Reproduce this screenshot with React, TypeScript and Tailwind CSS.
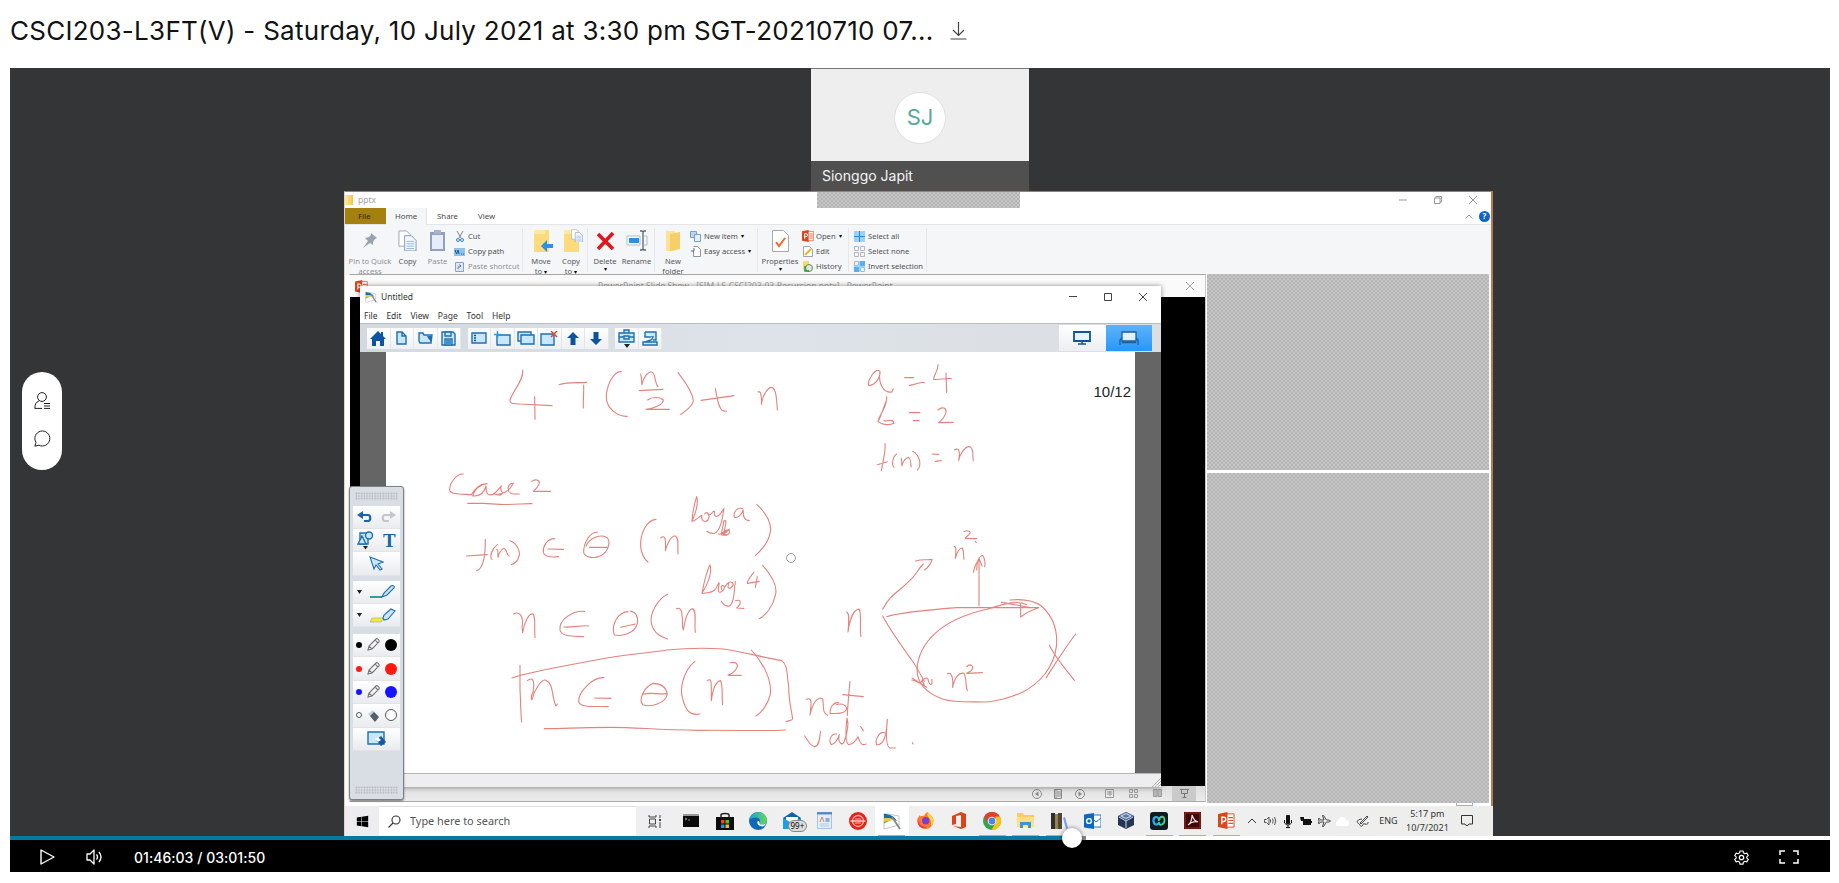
import React from "react";
import { FaWindows } from "react-icons/fa";

type Kids = { children?: React.ReactNode };

function Svg({ w, h, vb, children, className = "" }: { w: number; h: number; vb: string; className?: string } & Kids) {
  return (
    <svg width={w} height={h} viewBox={vb} fill="none" className={`block shrink-0 ${className}`}>
      {children}
    </svg>
  );
}

const HATCH =
  "bg-[#bdbdbd] bg-[repeating-conic-gradient(#b4b4b4_0_25%,#c6c6c6_0_50%)] bg-[length:4px_4px]";

/* ---------- File explorer ---------- */

function Big({ icon, label, width, dim, caret }: { icon: React.ReactNode; label: string[]; width: string; dim?: boolean; caret?: boolean }) {
  return (
    <div className={`flex shrink-0 flex-col items-center pt-[3px] ${width} ${dim ? "text-[#8d9095]" : "text-[#55585c]"}`}>
      <div className="mb-[0.5px] flex h-[25px] items-center">{icon}</div>
      {label.map((l, i) => (
        <span key={l} className="h-[10px] whitespace-nowrap leading-[14px]">
          {l}
          {caret && i === label.length - 1 && label.length > 1 ? <span className="ml-[2px] text-[6px] text-black">▾</span> : null}
        </span>
      ))}
      {caret && label.length === 1 ? <span className="h-[8px] text-[6px] leading-[11px] text-black">▾</span> : null}
    </div>
  );
}

function Small({ icon, label, dim, caret }: { icon: React.ReactNode; label: string; dim?: boolean; caret?: boolean }) {
  return (
    <div className={`flex h-[15.4px] items-center gap-[3px] whitespace-nowrap ${dim ? "text-[#8d9095]" : "text-[#4d5054]"}`}>
      <span className="flex w-[11px] justify-center">{icon}</span>
      <span>{label}</span>
      {caret && <span className="text-[6px] text-black">▾</span>}
    </div>
  );
}

const Divider = ({ m = "mx-[1px]" }: { m?: string }) => <div className={`my-[3px] w-px shrink-0 bg-[#e6e8eb] ${m}`} />;

const Pages = ({ s = 20 }: { s?: number }) => (
  <Svg w={s} h={s * 1.15} vb="0 0 20 23">
    <path d="M1 1h8l4 4v12H1z" fill="#fff" stroke="#9aa7b8" />
    <path d="M7 6h7l5 5v11H7z" fill="#f4f9ff" stroke="#8495ad" />
    <path d="M9 12h8M9 14.5h8M9 17h8M9 19.5h8" stroke="#8fb5e6" />
  </Svg>
);
const Folder = () => (
  <Svg w={17} h={24} vb="0 0 17 24">
    <path d="M1 1h15v22H1z" fill="#fbdb7c" />
    <path d="M1 1h11v4H1z" fill="#ffe9a5" />
  </Svg>
);
const PptIcon = ({ s }: { s: number }) => (
  <Svg w={s} h={s} vb="0 0 18 18">
    <path d="M8 2h9v14H8z" fill="#fff" stroke="#dd5026" />
    <path d="M11 6h5M11 9h5M11 12h5" stroke="#dd5026" strokeWidth="1.3" />
    <path d="M0 2 10 0v18L0 16z" fill="#d8481f" />
    <path d="M4 13V5.5h2a2 2 0 0 1 0 4.6H4" stroke="#fff" strokeWidth="1.5" />
  </Svg>
);

function Explorer() {
  return (
    <div className="flex h-[83px] w-full flex-col bg-white text-[7.6px]">
      <div className="flex h-[16px] items-center">
        <div className="h-[10px] w-[8px] bg-gradient-to-r from-[#ffe9a0] to-[#f4c64f]" />
        <span className="ml-[5px] text-[8.5px] text-[#a2a2a2]">pptx</span>
        <div className="ml-auto mr-[14px] flex items-center gap-[27px] text-[#9a9a9a]">
          <Svg w={8} h={8} vb="0 0 8 8"><path d="M0 4h8" stroke="#999" /></Svg>
          <Svg w={8} h={8} vb="0 0 8 8"><path d="M.5 2h5.5v5.500H.5zM2 2V.5h5.500V6H6" stroke="#999" /></Svg>
          <Svg w={8} h={8} vb="0 0 8 8"><path d="m0 0 8 8M8 0 0 8" stroke="#999" /></Svg>
        </div>
      </div>
      <div className="flex h-[17px] items-stretch border-b border-[#e4e5e7] text-[7.8px] text-[#4a4a4a]">
        <div className="flex w-[41px] items-center justify-center bg-[#a3800f] pr-[2px] pt-px text-[#2d2508]">File</div>
        <div className="-mb-px flex w-[41px] items-center justify-center border-r border-[#dfe1e4] bg-[#f4f6f8]">Home</div>
        <div className="flex w-[41px] items-center justify-center pt-px">Share</div>
        <div className="flex w-[37px] items-center justify-center pt-px">View</div>
        <div className="ml-auto mr-px flex items-center gap-[6px]">
          <Svg w={8} h={5} vb="0 0 8 5"><path d="M.5 4.500 4 1l3.500 3.500" stroke="#999" /></Svg>
          <div className="flex size-[11px] items-center justify-center rounded-full bg-[#0a66c6] text-[8px] font-bold text-white">?</div>
        </div>
      </div>
      <div className="flex h-[50px] items-stretch bg-[#f4f6f8]">
        <Big dim width="w-[46px] ml-[2px]" label={["Pin to Quick", "access"]}
          icon={<Svg w={16} h={17} vb="0 0 16 17"><path d="m9 1 6 5-2 1-2 3 0 3-3-2-7 5 5-7-3-3 4-1 2-2z" fill="#99a3b1" /></Svg>} />
        <Big width="w-[29px]" label={["Copy"]} icon={<Pages s={19} />} />
        <Big dim width="w-[31px]" label={["Paste"]}
          icon={<Svg w={17} h={23} vb="0 0 17 23"><path d="M1 3h15v19H1z" fill="#8fa1bd" /><path d="M3 6h11v14H3z" fill="#e6edf8" /><path d="M5 1h7v4H5z" fill="#a9b4c4" /></Svg>} />
        <div className="ml-px w-[68px] shrink-0 pt-[3.5px]">
          <Small label="Cut" icon={<Svg w={8} h={11} vb="0 0 8 11"><path d="m1 0 4 7M7 0 3 7" stroke="#7c8795" /><circle cx="2" cy="9" r="1.500" stroke="#2f80c8" /><circle cx="6" cy="9" r="1.500" stroke="#2f80c8" /></Svg>} />
          <Small label="Copy path" icon={<Svg w={11} h={8} vb="0 0 11 8"><path d="M0 0h11v8H0z" fill="#8fc3ee" /><path d="m1 2 1.500 4L4 2l1 4M7 6h1M9 6h1" stroke="#23547e" /></Svg>} />
          <Small dim label="Paste shortcut" icon={<Svg w={9} h={11} vb="0 0 9 11"><path d="M.5 1.500h8v9h-8z" fill="#dfe7f2" stroke="#8fa1bd" /><path d="M3 8c0-3 1-3 3-3M4.500 3.500 6 5 4.500 6.500" stroke="#5874a3" /></Svg>} />
        </div>
        <Divider m="ml-0 mr-[3px]" />
        <Big width="w-[30px]" caret label={["Move", "to"]}
          icon={<div className="relative"><Folder /><div className="absolute left-[8px] top-[11px]"><Svg w={12} h={12} vb="0 0 12 12"><path d="M0 6 6 0v4h6v4H6v4z" fill="#2b90e6" /></Svg></div></div>} />
        <Big width="w-[30px]" caret label={["Copy", "to"]}
          icon={<div className="relative"><Folder /><div className="absolute left-[8px] top-0"><Pages s={12} /></div></div>} />
        <Divider />
        <Big width="w-[32px]" caret label={["Delete"]}
          icon={<Svg w={19} h={18} vb="0 0 19 18"><path d="m2 2 15 15M17 1 2 17" stroke="#e3151a" strokeWidth="3.600" /></Svg>} />
        <Big width="w-[31px]" label={["Rename"]}
          icon={<Svg w={22} h={21} vb="0 0 22 21"><path d="M1 6h13v9H1z" fill="#fff" stroke="#b6bcc4" /><path d="M3 8h10v5H3z" fill="#2a8fe8" /><path d="M14 1h2l1 1 1-1h2M17 2v17M14 20h2l1-1 1 1h2" stroke="#5b6672" strokeWidth="1.300" /><path d="M18 6h3v9h-3" stroke="#b6bcc4" /></Svg>} />
        <Divider m="mx-[2px]" />
        <Big width="w-[32px]" label={["New", "folder"]}
          icon={<Svg w={14} h={20} vb="0 0 14 20"><path d="M0 0h9v20H0z" fill="#ffe293" /><path d="m4 3 10-2v17l-10 2z" fill="#f6cf68" /></Svg>} />
        <div className="ml-px w-[67px] shrink-0 pt-[3.5px]">
          <Small caret label="New item" icon={<Svg w={11} h={11} vb="0 0 11 11"><path d="M.5.500h6v6h-6z" fill="#b9d7f2" stroke="#7b9fc4" /><path d="M4.500 3.500h6v7h-6z" fill="#e4f1fc" stroke="#7b9fc4" /></Svg>} />
          <Small caret label="Easy access" icon={<Svg w={10} h={11} vb="0 0 10 11"><path d="M2.500.500h4l3 3v7h-7V5" fill="#fff" stroke="#8d97a3" /><path d="M0 5h3V2" stroke="#54677c" /></Svg>} />
        </div>
        <Divider m="mr-[1px]" />
        <Big width="w-[42px]" caret label={["Properties"]}
          icon={<Svg w={17} h={22} vb="0 0 17 22"><path d="M.5.500h11l5 5v16H.5z" fill="#fff" stroke="#a6a9ad" /><path d="m4 12 3 4 6-8" stroke="#f06a2b" strokeWidth="2" /></Svg>} />
        <div className="ml-px w-[46px] shrink-0 pt-[3.5px]">
          <Small caret label="Open" icon={<PptIcon s={12} />} />
          <Small label="Edit" icon={<Svg w={10} h={11} vb="0 0 10 11"><path d="M.5.500h6l3 3v7h-9z" fill="#fff" stroke="#9da3aa" /><path d="m2 9 6-6" stroke="#edb524" strokeWidth="2" /></Svg>} />
          <Small label="History" icon={<Svg w={11} h={11} vb="0 0 11 11"><path d="M1 0h6v9H1z" fill="#fbd76f" /><circle cx="7" cy="7" r="3.500" fill="#dfe8df" stroke="#5c8d57" /><path d="M3 5v5h4" stroke="#2f9a36" strokeWidth="1.500" /></Svg>} />
        </div>
        <Divider m="mr-[5px]" />
        <div className="w-[71px] shrink-0 pt-[3.5px]">
          <Small label="Select all" icon={<Svg w={11} h={11} vb="0 0 11 11"><path d="M0 0h11v11H0z" fill="#9bd0f8" /><path d="M5.500 0v11M0 5.500h11" stroke="#2f8ad8" /></Svg>} />
          <Small label="Select none" icon={<Svg w={11} h={11} vb="0 0 11 11"><path d="M.5.500h4v4h-4zM6.500.500h4v4h-4zM.5 6.500h4v4h-4zM6.500 6.500h4v4h-4z" stroke="#b4b8bd" /></Svg>} />
          <Small label="Invert selection" icon={<Svg w={11} h={11} vb="0 0 11 11"><path d="M5.500 0H11v5.500H5.500zM0 5.500h5.500V11H0z" fill="#58aff0" /><path d="M.5.500h4v4h-4zM6.500 6.500h4v4h-4z" fill="#e3f1fc" stroke="#8fc0e8" /></Svg>} />
        </div>
        <Divider />
      </div>
    </div>
  );
}

/* ---------- Whiteboard ---------- */

const INK_A = [
  "M368 60C372 90 340 120 330 150C328 162 340 160 360 162L456 167M404 140L405 208",
  "M477 104C500 96 530 99 560 97M551 105C552 130 549 150 550 174",
  "M664 65C640 62 618 110 619 145C622 175 650 200 682 199",
  "M722 72C726 85 724 95 726 104C730 80 745 64 755 66C768 70 762 95 774 110M718 122L789 118",
  "M743 150C755 140 780 140 790 150C790 163 762 176 738 178L808 178",
  "M834 68C855 95 880 130 880 155C872 175 856 184 842 193",
  "M903 151L1002 137M946 116C950 140 955 165 962 176C966 186 974 183 980 183",
  "M1074 126C1082 120 1086 140 1084 163C1088 135 1104 112 1114 112C1128 112 1130 145 1132 180",
  "M190 372C170 370 148 400 149 420C150 435 190 432 214 434C222 420 240 398 262 402C250 400 225 412 218 438C240 440 252 430 258 408C258 425 260 438 276 434C290 430 300 410 304 408C296 430 318 425 300 436L282 432C310 436 330 420 340 400C320 398 318 430 340 432L358 432",
  "M395 394C405 386 420 390 418 400C414 412 405 420 400 424L452 424",
  "M203 460L250 460L300 463C340 466 370 460 396 461",
  "M199 618L262 614M256 568C256 600 252 640 242 652C238 662 232 660 230 662M292 584C275 596 268 622 276 628M290 598C298 600 292 610 294 622C298 604 308 594 314 596C322 600 320 618 328 618M330 572C355 580 362 612 356 620C354 634 345 640 334 644",
  "M464 566C440 566 428 590 430 608C435 622 458 622 476 620M444 597L491 598",
  "M592 547C570 545 550 580 551 608C556 624 586 626 600 618C630 604 634 566 616 560C602 554 570 562 558 588M568 592L622 592",
  "M768 508C740 510 720 550 722 590C724 610 734 628 744 636",
  "M782 564C796 552 798 570 796 602C802 580 814 556 826 558C838 562 832 590 834 612",
  "M890 440C896 460 884 496 876 514C878 484 886 452 890 440M876 514C886 512 898 500 906 496C902 512 914 520 924 510C932 496 920 480 914 492M924 494C934 500 936 480 944 484C940 500 950 506 962 490L972 476C966 510 962 540 944 550C934 552 926 548 920 544",
  "M1028 476C1010 470 998 490 1004 502C1016 506 1026 490 1030 480C1028 500 1034 512 1048 512",
  "M970 516C978 505 982 512 970 552M956 552C968 556 976 532 988 542C994 552 976 558 964 554M972 512L964 552L988 538L972 552L980 556",
  "M1070 463C1100 490 1118 525 1110 550C1104 580 1085 600 1066 617",
];
const INK_B = [
  "M340 222C360 212 372 230 366 262L368 278C372 250 386 218 400 222C408 240 402 260 405 293",
  "M554 214C520 210 475 240 480 270C484 290 520 288 551 290M492 261C520 263 545 255 566 258",
  "M684 215C655 216 632 254 643 285C665 290 706 280 712 250C716 225 706 216 690 213M662 262L706 252",
  "M803 163C775 175 748 220 754 250C762 280 780 290 803 297",
  "M829 206C838 202 846 206 846 228C850 240 844 256 850 270C854 245 862 212 876 206C892 208 882 250 886 277",
  "M930 75C938 100 918 140 906 160C912 128 920 92 930 75M906 160C922 158 940 160 948 145C956 128 960 120 956 140C950 168 970 156 974 140C966 132 960 140 966 150M974 142C986 120 998 124 1000 134C990 150 980 148 986 130M1006 124C1002 160 1002 190 988 198C976 200 968 190 964 184",
  "M1062 96C1050 112 1040 124 1042 130L1078 124M1072 110L1066 142M1006 182C1024 176 1026 190 1010 204L1032 205",
  "M1088 76C1118 110 1134 140 1126 166C1118 200 1098 226 1078 236",
  "M360 376L360 450C362 480 362 520 365 546M336 414C400 392 520 374 620 354C700 340 760 338 800 330C860 324 930 324 970 327C1030 336 1080 350 1145 362C1164 376 1160 400 1166 440C1166 480 1174 510 1178 536C1176 544 1168 540 1158 545",
  "M382 422C398 410 404 420 400 450C402 460 388 464 396 480C402 450 424 418 436 420C462 430 454 470 468 498L472 492",
  "M612 413C580 410 534 455 536 485C540 505 590 498 625 500M584 474L633 475",
  "M762 430C730 440 716 480 728 494C755 504 798 488 802 462C798 440 785 430 758 430M729 463C750 456 775 464 800 461",
  "M885 364C850 390 838 450 848 475C856 510 870 528 900 522",
  "M922 422C936 412 934 430 934 482C938 450 948 424 962 422C970 440 964 470 968 494",
  "M990 368C1010 364 1016 374 1010 385C1002 398 994 402 984 406L1024 406",
  "M1054 330C1096 376 1118 430 1110 466C1104 490 1088 516 1068 528",
  "M433 566C500 566 530 562 630 562C720 562 760 570 900 571C1020 570 1080 574 1157 570",
];
const INK_C = [
  "M298 62C285 56 262 90 266 106C290 106 302 76 300 64C294 100 310 130 336 126L340 116M374 83L401 83M388 106C404 106 420 94 434 98",
  "M474 44C474 66 460 76 461 88C478 90 495 84 514 86M498 70L500 127",
  "M320 140C322 170 300 190 294 214C306 226 330 226 342 220L338 212C325 210 318 214 312 212M318 154L298 208M388 188L420 188M400 212L418 212",
  "M474 180C488 168 500 174 498 188C492 204 482 214 476 218L520 217",
  "M315 281C318 300 308 340 304 362M292 344L322 335M350 312C338 320 334 346 342 352M364 324L366 348C368 332 380 322 386 322C396 330 390 342 394 350M398 304C420 316 426 346 412 360M456 312L476 313M466 334L484 332",
  "M523 300C540 290 540 310 536 332C540 310 556 288 570 290C584 300 576 320 580 332",
  "M552 545C564 538 576 546 568 552C562 560 556 562 556 565L590 566M586 574L589 578",
  "M522 590C530 588 528 606 526 625C532 604 540 594 546 594C552 600 550 616 552 628",
  "M308 778C330 735 350 730 380 700C415 672 410 660 430 642M407 633C430 626 445 632 456 628C454 640 444 652 434 660",
  "M597 767L597 624M580 667C584 650 588 640 592 636L590 660M592 636C596 624 602 618 608 616C614 626 616 640 614 650M597 624L606 648",
  "M200 786C210 790 206 820 204 846C210 800 224 778 238 777C246 800 238 840 243 860",
  "M320 800C360 788 440 780 530 773L776 773C750 782 735 790 722 801L722 760M664 757C690 760 720 768 748 772",
  "M308 798C330 840 370 895 395 930C410 950 425 980 433 994",
  "M690 750C730 746 760 750 784 768C820 800 834 840 829 890C822 950 780 1000 730 1025C690 1045 640 1055 615 1056C570 1055 520 1058 490 1048C440 1030 412 1000 411 960C415 880 480 810 620 778C680 760 710 750 740 764",
  "M396 990C410 992 425 1002 440 1012M396 984L434 1008L426 990M420 1000C430 985 440 980 444 988C446 1000 452 1008 456 1000L456 988",
  "M502 971C514 966 520 980 518 1012C524 980 538 966 552 970C560 985 556 1005 562 1022",
  "M560 950C572 938 584 950 574 962L560 970L607 968",
  "M808 886C830 930 860 960 883 991M887 852C850 900 820 950 798 984",
  "M78 1048C98 1040 94 1060 90 1095C98 1060 110 1040 128 1046C132 1070 126 1088 143 1096M176 1058C160 1056 148 1074 150 1090C180 1092 200 1088 200 1074C196 1062 180 1060 170 1064M210 995C206 1030 204 1060 202 1096M188 1034L250 1040",
  "M74 1158C86 1174 90 1188 104 1190C120 1188 118 1160 122 1144M170 1152C150 1150 146 1176 154 1184C170 1180 176 1160 178 1154C172 1176 186 1190 192 1176C202 1150 206 1120 201 1104C196 1140 196 1180 206 1184C224 1180 230 1168 234 1160C240 1180 246 1188 258 1182M242 1130L250 1142",
  "M314 1148C298 1142 284 1170 290 1184C310 1186 320 1160 322 1108C318 1150 318 1190 330 1194L346 1194M397 1178L399 1182",
];

function Board() {
  return (
    <svg width="749" height="421" viewBox="386 352 749 421" fill="none" className="block bg-white">
      <g stroke="#e4827d" strokeWidth="3.300" strokeLinecap="round" strokeLinejoin="round">
        <g transform="translate(400 350) scale(.33333)">{INK_A.map((d) => <path key={d} d={d} />)}</g>
        <g transform="translate(400 540) scale(.33333)">{INK_B.map((d) => <path key={d} d={d} />)}</g>
        <g transform="translate(780 350) scale(.33333)">{INK_C.map((d) => <path key={d} d={d} />)}</g>
      </g>
      <circle cx="791" cy="558" r="4.500" stroke="#9c9c9c" />
      <text x="1093.5" y="397" fill="#222" fontSize="15" fontFamily="Liberation Sans, sans-serif">10/12</text>
    </svg>
  );
}

const Tool = ({ children }: Kids) => (
  <div className="flex h-[21px] w-[23.5px] items-center justify-center border-r border-[#e3e6ea] bg-gradient-to-b from-white to-[#eef0f3]">{children}</div>
);
const blue = { stroke: "#1f6fb2", strokeWidth: 1.4, fill: "#c9e7fb" };

function SmartMark({ s }: { s: number }) {
  return (
    <Svg w={s} h={s} vb="0 0 18 18">
      <path d="M1 1.500 16 4v9L1 17z" fill="#fff" stroke="#c2c5c7" />
      <path d="M1 2c6 0 10 2 13 7C10 7 6 6 1 6z" fill="#166fae" />
      <path d="M1 6c4 0 7 0 10 2l-10 2z" fill="#e8cb3c" />
      <path d="M1 10 7 8.500l-6 3z" fill="#4ea35a" />
      <path d="m9 5 8 12" stroke="#85898c" strokeWidth="1.800" />
    </Svg>
  );
}

function Notebook() {
  return (
    <div className="absolute left-[15px] top-[94px] flex h-[501px] w-[801px] flex-col bg-white shadow-[0_0_5px_rgba(0,0,0,0.45)]">
      <div className="flex h-[22px] items-center pl-[5px] pr-[14px]">
        <SmartMark s={12} />
        <span className="ml-[4px] text-[8.500px] text-[#333]">Untitled</span>
        <div className="ml-auto flex items-center gap-[27px]">
          <Svg w={8} h={8} vb="0 0 8 8"><path d="M0 3.500h8" stroke="#444" /></Svg>
          <Svg w={8} h={8} vb="0 0 8 8"><path d="M.5.500h7v7h-7z" stroke="#444" /></Svg>
          <Svg w={8} h={8} vb="0 0 8 8"><path d="m0 0 8 8M8 0 0 8" stroke="#444" /></Svg>
        </div>
      </div>
      <div className="flex h-[15px] items-center gap-[8.800px] pl-[4px] pt-[2px] text-[8.500px] text-[#333]">
        {["File", "Edit", "View", "Page", "Tool", "Help"].map((m) => <span key={m}>{m}</span>)}
      </div>
      <div className="flex h-[29px] shrink-0 items-center border-t border-[#b9bdc1] bg-gradient-to-r from-[#d3dadf] via-[#dde3e8] to-[#dbdee3] pl-[7px] pr-[9px]">
        <div className="flex">
          <Tool><Svg w={16} h={15} vb="0 0 16 15"><path d="M8 0 0 8h2v7h4v-5h4v5h4V8h2l-3-3V1h-2v2z" fill="#0d54a0" /></Svg></Tool>
          <Tool><Svg w={11} h={14} vb="0 0 11 14"><path d="M1 1h5l4 4v8H1zM6 1v4h4" {...blue} /></Svg></Tool>
          <Tool><Svg w={15} h={12} vb="0 0 15 12"><path d="M1 1h4l1 2h6l2 0-1 8H2L1 9z" {...blue} /><path d="M9 4h5l-1 6-3-4z" fill="#1f6fb2" /></Svg></Tool>
          <Tool><Svg w={15} h={15} vb="0 0 15 15"><path d="M1 1h11l2 2v11H1z" {...blue} /><path d="M4 1h6v4H4zM4 8h7v6H4zM5 10h5M5 12h5" {...blue} /></Svg></Tool>
        </div>
        <div className="ml-[6.500px] flex">
          <Tool><Svg w={16} h={12} vb="0 0 16 12"><path d="M1 1h14v10H1z" {...blue} /><path d="M3 3.500h2M3 6h2M3 8.500h2" stroke="#0d54a0" strokeWidth="1.500" /></Svg></Tool>
          <Tool><Svg w={17} h={15} vb="0 0 17 15"><path d="M3 4h13v10H3z" {...blue} /><path d="M3.500 0v7M0 3.500h7" stroke="#2d9bd6" strokeWidth="1.500" /></Svg></Tool>
          <Tool><Svg w={18} h={14} vb="0 0 18 14"><path d="M1 1h13v9H1z" {...blue} /><path d="M4 4h13v9H4z" {...blue} /></Svg></Tool>
          <Tool><Svg w={18} h={15} vb="0 0 18 15"><path d="M1 3h13v11H1z" {...blue} /><path d="m11 0 6 6m0-6-6 6" stroke="#dd4b2c" strokeWidth="1.500" /></Svg></Tool>
          <Tool><Svg w={12} h={13} vb="0 0 12 13"><path d="m6 0 6 6H8.500v7h-5V6H0z" fill="#0d54a0" /></Svg></Tool>
          <Tool><Svg w={12} h={13} vb="0 0 12 13"><path d="m6 13 6-6H8.500V0h-5v7H0z" fill="#0d54a0" /></Svg></Tool>
        </div>
        <div className="ml-[6.500px] flex">
          <Tool><Svg w={17} h={19} vb="0 0 17 19"><path d="M1 4h15v9H1zM6 4V1h5v3M1 8h5M11 8h5M6 7h5v3H6z" {...blue} /><path d="M6 15h6l-3 4z" fill="#222" /></Svg></Tool>
          <Tool><Svg w={16} h={15} vb="0 0 16 15"><path d="M3 1h11v8h-3M3 1v5h7" {...blue} /><path d="M11 5c0 4-2 4-8 6M1 11h14v3H1z" {...blue} /></Svg></Tool>
        </div>
        <div className="ml-auto flex h-[26px]">
          <div className="flex w-[47px] items-center justify-center bg-gradient-to-b from-white to-[#eceef1] pr-[2px]">
            <Svg w={18} h={14} vb="0 0 18 14"><path d="M1 1h16v9H1z" fill="#e7f4fd" stroke="#0d54a0" strokeWidth="1.800" /><path d="M9 10v3M5 13h8" stroke="#0d54a0" strokeWidth="1.500" /></Svg>
          </div>
          <div className="flex w-[46px] items-center justify-center bg-gradient-to-b from-[#5cb2f8] to-[#2597fb]">
            <Svg w={20} h={15} vb="0 0 20 15"><path d="M3 1h14v9H3z" fill="#dff2ff" stroke="#1b5d9e" strokeWidth="1.300" /><path d="M3 7 1 9v5M17 7l2 2v5M3 11.500h14" stroke="#1b5d9e" strokeWidth="1.300" /></Svg>
          </div>
        </div>
      </div>
      <div className="flex h-[421px] shrink-0 bg-[#656565] pl-[26px]"><Board /></div>
      <div className="flex flex-1 items-end justify-end border-t border-[#b5b5b8] bg-[#eeeef1]">
        <Svg w={9} h={9} vb="0 0 9 9"><path d="m0 9 9-9M3 9l6-6M6 9l3-3" stroke="#999" strokeWidth=".8" /></Svg>
      </div>
    </div>
  );
}

/* ---------- Floating tool palette ---------- */

const Row = ({ children, className = "" }: Kids & { className?: string }) => (
  <div className={`flex h-[23.400px] shrink-0 items-center justify-around border-b border-[#e2e4e8] bg-gradient-to-b from-white to-[#e9ebee] ${className}`}>{children}</div>
);
const Grip = () => (
  <div className="mx-[2px] h-[8px] shrink-0 bg-[radial-gradient(#b4b8bd_0.800px,transparent_1px)] bg-[length:2.700px_2.700px]" />
);
const Caret = () => <Svg w={5} h={4} vb="0 0 5 4"><path d="M0 0h5L2.500 4z" fill="#222" /></Svg>;
const Pencil = () => (
  <Svg w={13} h={14} vb="0 0 13 14"><path d="m1 12 1-4 7-7c1-1 4 1 3 3l-7 7zM8 2l3 3M2 8l3 3" stroke="#777" strokeWidth="1.100" /></Svg>
);
function PenRow({ dot, big }: { dot: string; big: string }) {
  return (
    <Row>
      <div className={`size-[6px] rounded-full ${dot}`} />
      <Pencil />
      <div className={`size-[12px] rounded-full ${big}`} />
    </Row>
  );
}

function Palette() {
  return (
    <div className="absolute left-[4px] top-[294px] flex h-[314px] w-[55px] flex-col rounded-[3px] border border-[#7d8186] bg-[#d9dde4] px-[3px] pb-[5px] pt-[5px] shadow-[0_1px_2px_rgba(0,0,0,0.5)]">
      <Grip />
      <Row className="mt-[5.500px]">
        <Svg w={15} h={12} vb="0 0 15 12"><path d="M3 4h8c3 0 3 6 0 6H7" stroke="#1d63ab" strokeWidth="2.200" /><path d="M0 4 6 0v8z" fill="#1d63ab" /></Svg>
        <Svg w={15} h={12} vb="0 0 15 12"><path d="M12 4H4c-3 0-3 6 0 6h4" stroke="#c2c5c9" strokeWidth="2.200" /><path d="M15 4 9 0v8z" fill="#c2c5c9" /></Svg>
      </Row>
      <Row>
        <Svg w={17} h={19} vb="0 0 17 19"><path d="M3 2h8v11H3z" {...blue} /><path d="m1 13 4-8 4 8z" {...blue} /><circle cx="12" cy="4.500" r="3.500" {...blue} /><path d="M6 15h5l-2.500 3.500z" fill="#222" /></Svg>
        <span className="font-['Liberation_Serif'] text-[19px] font-bold leading-none text-[#1c62a8]">T</span>
      </Row>
      <Row><Svg w={15} h={15} vb="0 0 15 15"><path d="m1 1 13 5-5 2 4 5-2 1-4-5-2 4z" {...blue} strokeWidth={1.1} /></Svg></Row>
      <Row className="mt-[5px]">
        <Caret />
        <Svg w={27} h={14} vb="0 0 27 14"><path d="M1 12h12" stroke="#159a86" strokeWidth="1.800" /><path d="m13 12 2-4 7-7c2-1 4 0 3 2l-7 7z" {...blue} strokeWidth={1.1} /></Svg>
      </Row>
      <Row>
        <Caret />
        <Svg w={27} h={15} vb="0 0 27 15"><path d="M3 10h12l-3 4H1z" fill="#f4ef24" stroke="#aaa" strokeWidth=".7" /><path d="m14 10 1-3 7-6 4 2-7 8-4 1z" {...blue} strokeWidth={1.1} /></Svg>
      </Row>
      <div className="h-[6.500px] shrink-0" />
      <PenRow dot="bg-black" big="bg-black" />
      <PenRow dot="bg-[#ff1a0d]" big="bg-[#ff1a0d]" />
      <PenRow dot="bg-[#1414ff]" big="bg-[#1414ff]" />
      <Row>
        <div className="size-[6px] rounded-full border border-[#555] bg-white" />
        <Svg w={12} h={13} vb="0 0 12 13"><path d="m1 5 5-4 4 5-4 4z" fill="#ccd1d6" /><path d="m3 7 4-4 5 5-4 5z" fill="#515f6e" /></Svg>
        <div className="size-[12px] rounded-full border border-[#555] bg-white" />
      </Row>
      <Row><Svg w={20} h={16} vb="0 0 20 16"><path d="M1 1h16v12H1z" {...blue} /><path d="m9 9 5-4 5 6-5 4z" fill="#1559a4" /><path d="m8 8 3-2 3 3-3 2z" fill="#fff" /></Svg></Row>
      <div className="flex-1" />
      <Grip />
    </div>
  );
}

/* ---------- Slide show window behind ---------- */

function SlideShow() {
  return (
    <div className="absolute left-[4px] top-[82px] flex h-[528px] w-[857px] flex-col border border-b-[#a9a9a9] border-l-transparent border-r-[#c8c8c8] border-t-[#a6a6a6] bg-[#fafafa]">
      <div className="flex h-[22px] shrink-0 items-center pl-[5px] pr-[11px] text-[8.500px] text-[#a5a5a5]">
        <PptIcon s={13} />
        <span className="ml-[230px] whitespace-nowrap">PowerPoint Slide Show - [SIM-LS-CSCI203-03-Recursion.pptx] - PowerPoint</span>
        <div className="ml-auto"><Svg w={8} h={8} vb="0 0 8 8"><path d="m0 0 8 8M8 0 0 8" stroke="#aaa" /></Svg></div>
      </div>
      <div className="h-[489px] shrink-0 bg-black" />
      <div className="flex flex-1 items-center justify-end bg-gradient-to-b from-[#dcdcdc] to-[#ededee] pr-[9px]">
        <div className="flex items-center gap-[12px]">
          <Svg w={10} h={10} vb="0 0 10 10"><circle cx="5" cy="5" r="4.500" stroke="#888" /><path d="M6.500 2.500v5L3 5z" fill="#888" /></Svg>
          <Svg w={9} h={10} vb="0 0 9 10"><path d="M.5.500h7v9h-7zM2 .5v9" stroke="#888" /><path d="M3 3h4M3 5h4M3 7h4" stroke="#888" /></Svg>
          <Svg w={10} h={10} vb="0 0 10 10"><circle cx="5" cy="5" r="4.500" stroke="#888" /><path d="M3.500 2.500v5L7 5z" fill="#888" /></Svg>
        </div>
        <div className="ml-[20px] flex items-center gap-[15px]">
          <Svg w={9} h={9} vb="0 0 9 9"><path d="M.5.500h8v8h-8zM2 3h5M2 5h5M5 2v5" stroke="#999" /></Svg>
          <Svg w={9} h={9} vb="0 0 9 9"><path d="M.5.500h3v3h-3zM5.500.500h3v3h-3zM.5 5.500h3v3h-3zM5.500 5.500h3v3h-3z" stroke="#999" /></Svg>
          <Svg w={9} h={9} vb="0 0 9 9"><path d="M.5.500h3.500v7H.5zM5 .500h3.500v7H5z" fill="#bbb" stroke="#999" /></Svg>
        </div>
        <div className="ml-[10px] flex h-full w-[24px] items-center justify-center bg-[#cacaca]">
          <Svg w={9} h={9} vb="0 0 9 9"><path d="M0 .500h9M1.500 1v3.500h6V1M4.500 5v3.500M2.500 8.500h4" stroke="#777" /></Svg>
        </div>
      </div>
    </div>
  );
}

/* ---------- Taskbar ---------- */

const TaskApp = ({ children, tint = "", open = false }: Kids & { tint?: string; open?: boolean }) => (
  <div className={`flex h-full w-[33.450px] shrink-0 flex-col items-center ${tint}`}>
    <div className="flex flex-1 items-center pt-px">{children}</div>
    <div className={`h-[1.500px] w-[27px] ${open ? "bg-[#c3b35c]" : ""}`} />
  </div>
);

function Taskbar() {
  return (
    <div className="absolute left-0 top-[614px] flex h-[30px] w-[1148px] items-center bg-gradient-to-r from-[#ededf0] via-[#f0f0f0] to-[#ededec] shadow-[0_1px_0_#8f8f8f]">
      <div className="flex w-[34px] justify-center text-[13px] text-black"><FaWindows /></div>
      <div className="flex h-full w-[257px] items-center border-t border-[#ddd] bg-white pl-[9px]">
        <Svg w={13} h={13} vb="0 0 13 13"><circle cx="8" cy="5" r="4" stroke="#333" strokeWidth="1.100" /><path d="m5 8-4.500 4.500" stroke="#333" strokeWidth="1.100" /></Svg>
        <span className="ml-[9px] text-[10.900px] text-[#555]">Type here to search</span>
      </div>
      <div className="flex w-[38.500px] justify-center">
        <Svg w={14} h={13} vb="0 0 14 13"><path d="M1 0v2h7V0M1 13v-2h7v2M1.500 4h6v5h-6zM12 0v3M12 7v6" stroke="#444" /><path d="M11 4h2v2h-2z" fill="#444" /></Svg>
      </div>
      <TaskApp><Svg w={16} h={13} vb="0 0 16 13"><path d="M0 0h16v13H0z" fill="#0b0b0b" /><path d="M0 0h16v2H0z" fill="#999" /><path d="m2 4 2 1-2 1M5 6h2" stroke="#aaa" strokeWidth=".8" /></Svg></TaskApp>
      <TaskApp><Svg w={18} h={18} vb="0 0 18 18"><path d="M0 5h18v13H0z" fill="#0c0c0c" /><path d="M5 6V3c0-2 8-2 8 0v3" stroke="#222" strokeWidth="1.500" /><path d="M5 8h3.500v3.500H5z" fill="#e64b27" /><path d="M9.500 8H13v3.500H9.500z" fill="#77b900" /><path d="M5 12.500h3.500V16H5z" fill="#0a9ce8" /><path d="M9.500 12.500H13V16H9.500z" fill="#fcb813" /></Svg></TaskApp>
      <TaskApp>
        <Svg w={18} h={18} vb="0 0 18 18">
          <defs>
            <linearGradient id="edge" x1="0" y1="4" x2="18" y2="6" gradientUnits="userSpaceOnUse"><stop stopColor="#1c9fdc" /><stop offset="1" stopColor="#62d95a" /></linearGradient>
          </defs>
          <circle cx="9" cy="9" r="9" fill="#1068b5" />
          <path d="M.2 8C1.500 2.500 5 0 9 0c5 0 9 3.500 9 8 0 3-2.500 4.500-5 4.500-2 0-3-.8-2.500-1.800C12 8 10 5.500 7 5.500 4 5.500 1.500 6.500.2 8z" fill="url(#edge)" />
          <path d="M10.500 10.700c-.5 1 .5 1.800 2.500 1.800 1.500 0 3-.6 4-1.600-.5 2-2 3.500-3.800 3.500-3.200 0-5.600-2.400-4.700-5 .5-1 2-.5 2 1.300z" fill="#fff" />
        </Svg>
      </TaskApp>
      <TaskApp>
        <div className="relative">
          <Svg w={18} h={17} vb="0 0 18 17"><path d="M0 6 9 0l9 6v11H0z" fill="#1065a8" /><path d="M3 5h12v5H3z" fill="#fff" /><path d="m0 6 9 5 9-5v11H0z" fill="#229ee6" /></Svg>
          <div className="absolute left-[5px] top-[8px] rounded-full border border-[#888] bg-[#dcdcdc] px-[2px] text-[8px] leading-[10px] text-black">99+</div>
        </div>
      </TaskApp>
      <TaskApp><Svg w={15} h={17} vb="0 0 15 17"><path d="M.5.500h14v16H.5z" fill="#e3eefa" stroke="#a9c3e0" /><path d="M0 0h15v2.500H0z" fill="#5f8cc0" /><path d="m3 10 2-5 2 5" stroke="#d98b4b" /><path d="M8.500 6h4v4h-4z" fill="#86aede" /><path d="M3 12h9M3 14h9" stroke="#b4c9e2" /></Svg></TaskApp>
      <TaskApp><Svg w={18} h={18} vb="0 0 18 18"><circle cx="9" cy="9" r="9" fill="#ec1f17" /><circle cx="9" cy="9" r="5.500" stroke="#ffb7b2" strokeWidth="1.300" /><path d="M1.500 9h15" stroke="#ffd0cc" strokeWidth="1.500" /><path d="M6 7h6M6 11h6" stroke="#ffb7b2" /></Svg></TaskApp>
      <TaskApp tint="bg-white" open><SmartMark s={18} /></TaskApp>
      <TaskApp>
        <Svg w={17} h={17} vb="0 0 17 17">
          <path d="M8.500 17A8.200 8.200 0 0 1 .5 8.500C.5 6 1.500 4.500 3 3l.5 1.500C4.500 3.500 6 3.500 7 4c1-2 2-3.500 4-4 0 2 5.500 3.500 5.500 8.500a8.200 8.200 0 0 1-8 8.500z" fill="#ff7a2b" />
          <path d="M11 0c0 2 5.500 3.500 5.500 8.500 0 2-1 4.500-2.500 6 .5-3 .5-5-1.500-8C11 4.500 9.500 3 11 0z" fill="#ffd23e" />
          <path d="M1 6c0 6 4 9 9 9-3 2.500-9 1-9.500-6z" fill="#f5365c" />
          <circle cx="8.700" cy="8.700" r="3.700" fill="#7a3fd1" />
        </Svg>
      </TaskApp>
      <TaskApp><Svg w={14} h={17} vb="0 0 14 17"><path d="m9 0 5 2v13l-5 2-8-3 8 1V3L4 4v8l-4 1V4z" fill="#dc4416" /></Svg></TaskApp>
      <TaskApp open>
        <Svg w={18} h={18} vb="0 0 18 18"><circle cx="9" cy="9" r="9" fill="#34a350" /><path d="M1.200 4.500A9 9 0 0 1 16.800 4.500L9 9z" fill="#e2402f" /><path d="M1.200 4.500 5 11.500 9 9 9 4.500h7.800z" fill="#e2402f" /><path d="M16.800 4.500A9 9 0 0 1 8.500 18L12.500 11l0-6.500z" fill="#fbc116" /><circle cx="9" cy="9" r="4.300" fill="#fff" /><circle cx="9" cy="9" r="3.400" fill="#4a86ea" /></Svg>
      </TaskApp>
      <TaskApp open><Svg w={17} h={15} vb="0 0 17 15"><path d="M0 0h6l1 2h10v12H0z" fill="#f8cd5c" /><path d="M0 4h17v10H0z" fill="#ffdf83" /><path d="M3 15V9h11v6h-3v-3H6v3z" fill="#3c93d8" /></Svg></TaskApp>
      <TaskApp open><Svg w={17} h={16} vb="0 0 17 16"><path d="M0 0h4v16H0z" fill="#30302b" /><path d="M4 1h3v15H4z" fill="#9b8351" /><path d="M7 0h4v16H7z" fill="#514738" /><path d="m12 5 2-1 3 11-2 1z" fill="#7f9fe6" /></Svg></TaskApp>
      <TaskApp><Svg w={17} h={16} vb="0 0 17 16"><path d="M8 2h9v12H8z" fill="#fff" stroke="#1f78c4" /><path d="m8 5 4 4 5-4" stroke="#1f78c4" /><path d="M0 1.500 10 0v16L0 14.500z" fill="#0d69bb" /><circle cx="5" cy="8" r="2.400" stroke="#fff" strokeWidth="1.400" /></Svg></TaskApp>
      <TaskApp><Svg w={16} h={17} vb="0 0 16 17"><path d="m8 0 8 4v9l-8 4-8-4V4z" fill="#23365a" /><path d="m8 0 8 4-8 4-8-4z" fill="#5f7aa6" /><path d="m1 5 7 4v7M15 5 8 9M8 1.500l5 2.500-5 2.500L3 4z" stroke="#dfe8f4" strokeWidth=".9" /></Svg></TaskApp>
      <TaskApp open><Svg w={18} h={18} vb="0 0 18 18"><rect width="18" height="18" rx="3" fill="#111b22" /><path d="M9.500 8c-2-5-6.500-3-6 1s4 5 6 1" stroke="#29a9f2" strokeWidth="2.200" /><path d="M8.500 9c1-5 6-6 6-1s-4.500 6-6 3" stroke="#4bd27c" strokeWidth="1.800" /></Svg></TaskApp>
      <TaskApp open><Svg w={17} h={17} vb="0 0 17 17"><path d="M0 0h17v17H0z" fill="#3a0806" /><path d="M1 1h15v15H1z" stroke="#b5271f" /><path d="M8 3c2 5 3 6 6 7-4-1-7 0-10 3 3-2 4-5 4-10z" stroke="#f2d9d7" strokeWidth="1.200" /></Svg></TaskApp>
      <TaskApp open><PptIcon s={17} /></TaskApp>
      <div className="ml-[0.500px] flex items-center text-[9px] text-[#333]">
        <div className="flex w-[18px] justify-center"><Svg w={10} h={6} vb="0 0 9 6"><path d="M.5 5 4.500 1l4 4" stroke="#333" /></Svg></div>
        <div className="flex w-[18px] justify-center"><Svg w={13} h={10} vb="0 0 13 10"><path d="M.5 3.500h2L5 1v8L2.500 6.500h-2zM6.500 3.500v3M8.500 2.500q1.500 2.500 0 5M10.500 1q2.500 4 0 8" stroke="#444" strokeWidth=".9" /></Svg></div>
        <div className="flex w-[18px] justify-center"><Svg w={8} h={13} vb="0 0 8 13"><rect x="2" width="4" height="9" rx="1" fill="#111" /><path d="M.5 5v3q3.500 4 7 0V5M4 10v3M2 12.500h4" stroke="#111" /></Svg></div>
        <div className="flex w-[18px] justify-center"><Svg w={12} h={9} vb="0 0 12 9"><path d="M3 2h8v6H3zM11 4h1v2h-1zM0 0h4v4H1z" fill="#111" /></Svg></div>
        <div className="flex w-[18px] justify-center"><Svg w={13} h={12} vb="0 0 13 12"><path d="M12.500 6c-1-1-2-1-4-1L5.500.500h-1L6 5H2.500L1.500 3.500h-1L1 6l-.5 2.500h1L2.500 7H6l-1.500 4.500h1L8.500 7c2 0 3 0 4-1z" stroke="#333" strokeWidth=".9" /></Svg></div>
        <div className="flex w-[18px] justify-center"><Svg w={13} h={9} vb="0 0 13 9"><path d="M2 9a2 2 0 0 1 0-5C3-1 9-1 10 3c4 1 4 6 1 6z" fill="#fff" /></Svg></div>
        <div className="flex w-[23px] justify-center"><Svg w={13} h={13} vb="0 0 13 13"><path d="M4 8 11 1l1 1-7 7zM6 4C2 4 0 7 2 8s2 4 4 3 0-3 3-2 3-1 3-2" stroke="#333" strokeWidth=".9" /></Svg></div>
        <div className="w-[28px] text-center">ENG</div>
        <div className="w-[50px] text-center text-[9px] leading-[14px]">5:17 pm<br />10/7/2021</div>
        <div className="flex w-[29px] justify-center"><Svg w={12} h={12} vb="0 0 12 12"><path d="M.5.500h11v8.500H8L6 11 4 9H.5z" stroke="#333" /></Svg></div>
      </div>
    </div>
  );
}

function SharedScreen() {
  return (
    <div className="absolute left-[334px] top-[123px] h-[645px] w-[1149px] border-l border-r-2 border-t border-[#b97850] border-l-[#e5cfc2] bg-white font-['Noto_Sans',sans-serif]">
      <Explorer />
      <div className={`absolute left-[472px] top-0 h-[16px] w-[203px] ${HATCH}`} />
      <div className="absolute left-[862px] top-[82px] flex h-[529px] w-[282px] flex-col gap-[3px]">
        <div className={`h-[196px] ${HATCH}`} />
        <div className={`flex-1 ${HATCH}`} />
      </div>
      <SlideShow />
      <Notebook />
      <Palette />
      <div className="absolute left-[1111px] top-[611px] h-[3px] w-[17px] border border-t-0 border-[#7dbce8]" />
      <Taskbar />
    </div>
  );
}

export default function App() {
  return (
    <div className="flex h-[883px] w-[1839px] flex-col overflow-hidden bg-white pl-[10px] font-['Inter',sans-serif]">
      <header className="flex h-[68px] items-center pb-[7px]">
        <h1 className="w-[922px] whitespace-nowrap text-[26px] tracking-[0.270px] text-[#121212]">CSCI203-L3FT(V) - Saturday, 10 July 2021 at 3:30 pm SGT-20210710 07...</h1>
        <Svg w={17} h={18} vb="0 0 17 18" className="ml-[18px] mt-px"><path d="M8.500 0v13M3 8l5.500 5.500L14 8M.5 17h16" stroke="#444" strokeWidth="1.200" /></Svg>
      </header>
      <main className="relative flex h-[804px] w-[1820px] flex-col bg-black">
        <section className="relative h-[768px] overflow-hidden bg-[#343537]">
          <SharedScreen />
          <div className="absolute left-[801px] top-0 flex h-[123px] w-[218px] flex-col">
            <div className="flex h-[93px] items-center justify-center border-t border-[#777] bg-[#efeeef] pt-[5px]">
              <div className="flex size-[52px] items-center justify-center rounded-full border border-[#e0e0e0] bg-white text-[22px] text-[#55a99b]">SJ</div>
            </div>
            <div className="flex flex-1 items-center bg-[#505050] pb-[2px] pl-[11px] text-[14px] text-[#f5f5f5]">Sionggo Japit</div>
          </div>
          <div className="absolute left-[12px] top-[304px] flex h-[98px] w-[40px] flex-col items-center justify-center gap-[21px] rounded-full bg-white pb-[3px]">
            <Svg w={17} h={17} vb="0 0 17 17"><circle cx="8" cy="5" r="4.400" stroke="#222" /><path d="M5 9C2 10 1 12 .8 16.400H8M10 11.500h6M10 14h6M10 16.400h6" stroke="#222" /></Svg>
            <Svg w={17} h={17} vb="0 0 17 17"><path d="M.8 16.200 2 12.500a7.500 7.500 0 1 1 3 2.700z" stroke="#222" /></Svg>
          </div>
        </section>
        <div className="relative flex h-[4px] bg-white">
          <div className="w-[1062px] bg-[#0779a5]" />
          <div className="w-[14px] bg-[#8a8a8a]" />
          <div className="absolute left-[1052px] top-[-8px] size-[20px] rounded-full bg-white shadow-[0_0_4px_rgba(0,0,0,0.5)]" />
        </div>
        <div className="flex flex-1 items-center pb-px pl-[30px] pr-[31px] pt-[3px]">
          <Svg w={15} h={16} vb="0 0 15 16"><path d="M1 1v14l13-7z" stroke="#fff" strokeWidth="1.400" strokeLinejoin="round" /></Svg>
          <Svg w={17} h={16} vb="0 0 17 16" className="ml-[31px]"><path d="M1 5h3l4-4v14l-4-4H1zM10.500 5.500q2 2.500 0 5M13 3q4 5 0 10" stroke="#fff" strokeWidth="1.300" strokeLinejoin="round" /></Svg>
          <span className="ml-[31px] whitespace-nowrap text-[14px] font-medium tracking-[0.030px] text-white">01:46:03 / 03:01:50</span>
          <Svg w={15} h={15} vb="0 0 24 24" className="ml-auto">
            <circle cx="12" cy="12" r="3.500" stroke="#fff" strokeWidth="2" />
            <path d="m9.500 1.500-.5 3-2.500 1.500-3-1-2.300 4 2.300 2v2l-2.300 2 2.300 4 3-1L9 19.500l.5 3h5l.5-3 2.500-1.500 3 1 2.300-4-2.300-2v-2l2.300-2-2.300-4-3 1L15 4.500l-.5-3z" stroke="#fff" strokeWidth="1.800" strokeLinejoin="round" />
          </Svg>
          <Svg w={20} h={14} vb="0 0 20 14" className="ml-[30px]"><path d="M6 1H1v4M14 1h5v4M6 13H1V9M14 13h5V9" stroke="#fff" strokeWidth="1.500" /></Svg>
        </div>
      </main>
    </div>
  );
}
